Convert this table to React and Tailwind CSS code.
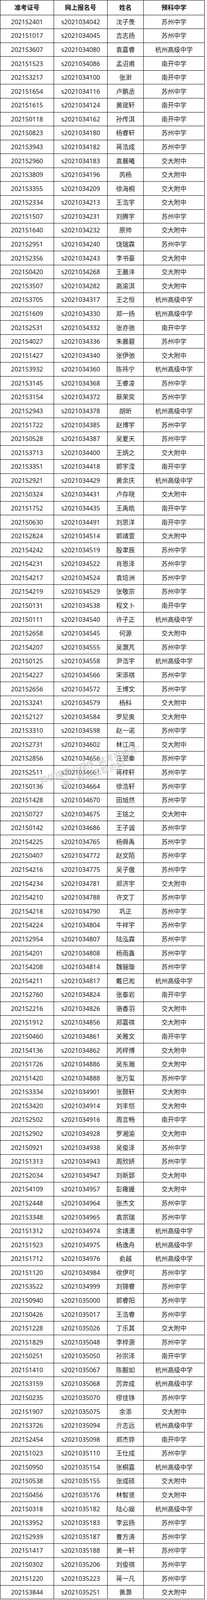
import React from "react";

// 准考证号 | 网上报名号 | 姓名 | 预科中学
const rows = [
  ["2021S2401", "s2021034042", "沈子羡", "苏州中学"],
  ["2021S1017", "s2021034045", "吉志扬", "苏州中学"],
  ["2021S3607", "s2021034080", "袁嘉睿", "杭州高级中学"],
  ["2021S1523", "s2021034086", "孟沼甫", "南开中学"],
  ["2021S3217", "s2021034100", "张澍", "南开中学"],
  ["2021S1654", "s2021034116", "卢鹏丞", "苏州中学"],
  ["2021S1615", "s2021034124", "黄宬轩", "南开中学"],
  ["2021S0118", "s2021034162", "孙传淇", "南开中学"],
  ["2021S0823", "s2021034180", "杨睿轩", "苏州中学"],
  ["2021S3943", "s2021034182", "蒋浩成", "苏州中学"],
  ["2021S2960", "s2021034183", "袁晨曦", "交大附中"],
  ["2021S3809", "s2021034196", "芮杨", "交大附中"],
  ["2021S3355", "s2021034209", "徐海桐", "交大附中"],
  ["2021S2334", "s2021034213", "王浩宇", "交大附中"],
  ["2021S1507", "s2021034231", "刘腾宇", "苏州中学"],
  ["2021S1640", "s2021034232", "原帅", "交大附中"],
  ["2021S2951", "s2021034240", "饶瑞霖", "苏州中学"],
  ["2021S2356", "s2021034243", "李书豪", "交大附中"],
  ["2021S0420", "s2021034268", "王晨沣", "交大附中"],
  ["2021S3507", "s2021034282", "高渝淇", "交大附中"],
  ["2021S3705", "s2021034317", "王之恒", "杭州高级中学"],
  ["2021S1609", "s2021034330", "郑一扬", "杭州高级中学"],
  ["2021S2531", "s2021034332", "张亦弛", "南开中学"],
  ["2021S4027", "s2021034336", "朱晨碧", "苏州中学"],
  ["2021S1427", "s2021034340", "张伊弛", "交大附中"],
  ["2021S3932", "s2021034360", "陈祎宁", "杭州高级中学"],
  ["2021S3145", "s2021034368", "王睿凌", "苏州中学"],
  ["2021S3154", "s2021034372", "蔡荣奕", "苏州中学"],
  ["2021S2943", "s2021034378", "胡昕", "杭州高级中学"],
  ["2021S1722", "s2021034385", "赵博宇", "苏州中学"],
  ["2021S0528", "s2021034387", "吴夏天", "苏州中学"],
  ["2021S3713", "s2021034400", "王炳之", "交大附中"],
  ["2021S3351", "s2021034418", "郭宇滢", "南开中学"],
  ["2021S2921", "s2021034429", "黄余庆", "杭州高级中学"],
  ["2021S0324", "s2021034431", "卢存晓", "交大附中"],
  ["2021S1752", "s2021034435", "王禹皓", "南开中学"],
  ["2021S0630", "s2021034491", "刘思洋", "南开中学"],
  ["2021S2824", "s2021034514", "郭靖萱", "交大附中"],
  ["2021S4242", "s2021034519", "殷聿辰", "苏州中学"],
  ["2021S4231", "s2021034522", "肖恩泽", "苏州中学"],
  ["2021S4217", "s2021034524", "袁培洲", "苏州中学"],
  ["2021S4219", "s2021034529", "张敬宗", "苏州中学"],
  ["2021S0131", "s2021034538", "程文卜", "南开中学"],
  ["2021S0111", "s2021034540", "许子正", "杭州高级中学"],
  ["2021S2658", "s2021034545", "何源", "交大附中"],
  ["2021S4207", "s2021034555", "吴灏芃", "苏州中学"],
  ["2021S0125", "s2021034558", "尹浩宇", "杭州高级中学"],
  ["2021S4227", "s2021034566", "宋添祺", "苏州中学"],
  ["2021S2656", "s2021034572", "王博文", "苏州中学"],
  ["2021S3241", "s2021034579", "杨科", "交大附中"],
  ["2021S2127", "s2021034584", "罗尼奥", "交大附中"],
  ["2021S3310", "s2021034598", "赵一诺", "苏州中学"],
  ["2021S2731", "s2021034602", "林江鸿", "交大附中"],
  ["2021S2856", "s2021034656", "汪翌秦", "苏州中学"],
  ["2021S2511", "s2021034661", "蒋梓轩", "苏州中学"],
  ["2021S0136", "s2021034664", "徐浩轩", "苏州中学"],
  ["2021S1428", "s2021034670", "田旭然", "苏州中学"],
  ["2021S0727", "s2021034675", "王铭之", "交大附中"],
  ["2021S0142", "s2021034686", "王子诚", "苏州中学"],
  ["2021S4225", "s2021034765", "杨舜禹", "苏州中学"],
  ["2021S0407", "s2021034772", "赵文陌", "苏州中学"],
  ["2021S4216", "s2021034775", "吴子傲", "苏州中学"],
  ["2021S4234", "s2021034781", "郑济宇", "交大附中"],
  ["2021S4210", "s2021034788", "许文丁", "苏州中学"],
  ["2021S4218", "s2021034790", "巩正", "苏州中学"],
  ["2021S4224", "s2021034804", "牛祥宇", "苏州中学"],
  ["2021S2954", "s2021034807", "陆泓霖", "苏州中学"],
  ["2021S4201", "s2021034808", "杨雨鑫", "苏州中学"],
  ["2021S4208", "s2021034814", "魏骊璇", "苏州中学"],
  ["2021S4211", "s2021034817", "戴已淞", "杭州高级中学"],
  ["2021S2760", "s2021034824", "张泰岩", "南开中学"],
  ["2021S2216", "s2021034826", "骆香羽", "交大附中"],
  ["2021S1912", "s2021034856", "郑嘉祺", "交大附中"],
  ["2021S0460", "s2021034861", "关雅文", "南开中学"],
  ["2021S4136", "s2021034862", "芮梓博", "交大附中"],
  ["2021S1726", "s2021034886", "吴东瀚", "交大附中"],
  ["2021S1420", "s2021034888", "张万玺", "苏州中学"],
  ["2021S3334", "s2021034901", "张颢轩", "交大附中"],
  ["2021S3420", "s2021034914", "刘丰恺", "交大附中"],
  ["2021S2502", "s2021034916", "周言畅", "南开中学"],
  ["2021S2902", "s2021034928", "罗湘渝", "交大附中"],
  ["2021S0921", "s2021034938", "吴俊泽", "苏州中学"],
  ["2021S1313", "s2021034943", "周欣妍", "苏州中学"],
  ["2021S2034", "s2021034947", "刘新郅", "交大附中"],
  ["2021S4109", "s2021034957", "彭雍媛", "交大附中"],
  ["2021S2448", "s2021034964", "张杰文", "苏州中学"],
  ["2021S3348", "s2021034965", "袁宗瑞", "苏州中学"],
  ["2021S1312", "s2021034974", "余靖潇", "杭州高级中学"],
  ["2021S1923", "s2021034975", "杨逸舟", "杭州高级中学"],
  ["2021S1712", "s2021034976", "俞越", "杭州高级中学"],
  ["2021S1120", "s2021034984", "徐伊可", "苏州中学"],
  ["2021S3522", "s2021034999", "刘锦睿", "苏州中学"],
  ["2021S0940", "s2021035000", "郭睿阳", "苏州中学"],
  ["2021S0426", "s2021035017", "王浩睿", "苏州中学"],
  ["2021S1228", "s2021035026", "丁乐其", "交大附中"],
  ["2021S1829", "s2021035048", "李梓源", "苏州中学"],
  ["2021S0251", "s2021035050", "孙宗泽", "南开中学"],
  ["2021S1410", "s2021035067", "陈靓如", "杭州高级中学"],
  ["2021S3159", "s2021035068", "厉奔成", "杭州高级中学"],
  ["2021S0235", "s2021035070", "缪佳铮", "苏州中学"],
  ["2021S1907", "s2021035075", "余添", "交大附中"],
  ["2021S3726", "s2021035094", "亓志远", "杭州高级中学"],
  ["2021S2454", "s2021035098", "郑杰铧", "南开中学"],
  ["2021S1023", "s2021035110", "王仕成", "苏州中学"],
  ["2021S0950", "s2021035154", "张桐嘉", "杭州高级中学"],
  ["2021S0538", "s2021035155", "张成硕", "交大附中"],
  ["2021S0456", "s2021035176", "林智贤", "交大附中"],
  ["2021S0318", "s2021035182", "陆心娱", "杭州高级中学"],
  ["2021S3952", "s2021035183", "李云扬", "苏州中学"],
  ["2021S2939", "s2021035187", "曹方涛", "苏州中学"],
  ["2021S1417", "s2021035188", "黄一轩", "苏州中学"],
  ["2021S0302", "s2021035206", "刘俊祺", "苏州中学"],
  ["2021S1220", "s2021035223", "蒋一凡", "苏州中学"],
  ["2021S3844", "s2021035251", "黄灏", "交大附中"],
];

const headers = ["准考证号", "网上报名号", "姓名", "预科中学"];

const cell = "flex items-center justify-center border-r border-b border-black whitespace-nowrap";

export default function App() {
  return (
    <div className="relative w-[529px] bg-white font-['Noto_Sans','Noto_Sans_CJK_SC',sans-serif] text-[16px] leading-5 text-[#1c1c1c]">
      <div className="grid w-[523px] grid-cols-[137px_137px_92px_156px] border-l border-t border-black">
        {headers.map((h) => (
          <div key={h} className={`${cell} h-[37.5px] font-bold`}>
            {h}
          </div>
        ))}
        {rows.map((r) =>
          r.map((c, i) => (
            <div key={r[0] + i} className={`${cell} h-[35.59px]`}>
              {c}
            </div>
          ))
        )}
      </div>

      {/* watermark */}
      <div className="pointer-events-none absolute left-[105px] top-[1988px] flex origin-left -rotate-[18deg] flex-col gap-1 text-[21px] font-bold leading-none text-[#c8c8c8]/70">
        <span>微信搜索小程序“高考早知道”</span>
        <span className="pl-[52px]">第一时间获取资料</span>
      </div>
    </div>
  );
}
